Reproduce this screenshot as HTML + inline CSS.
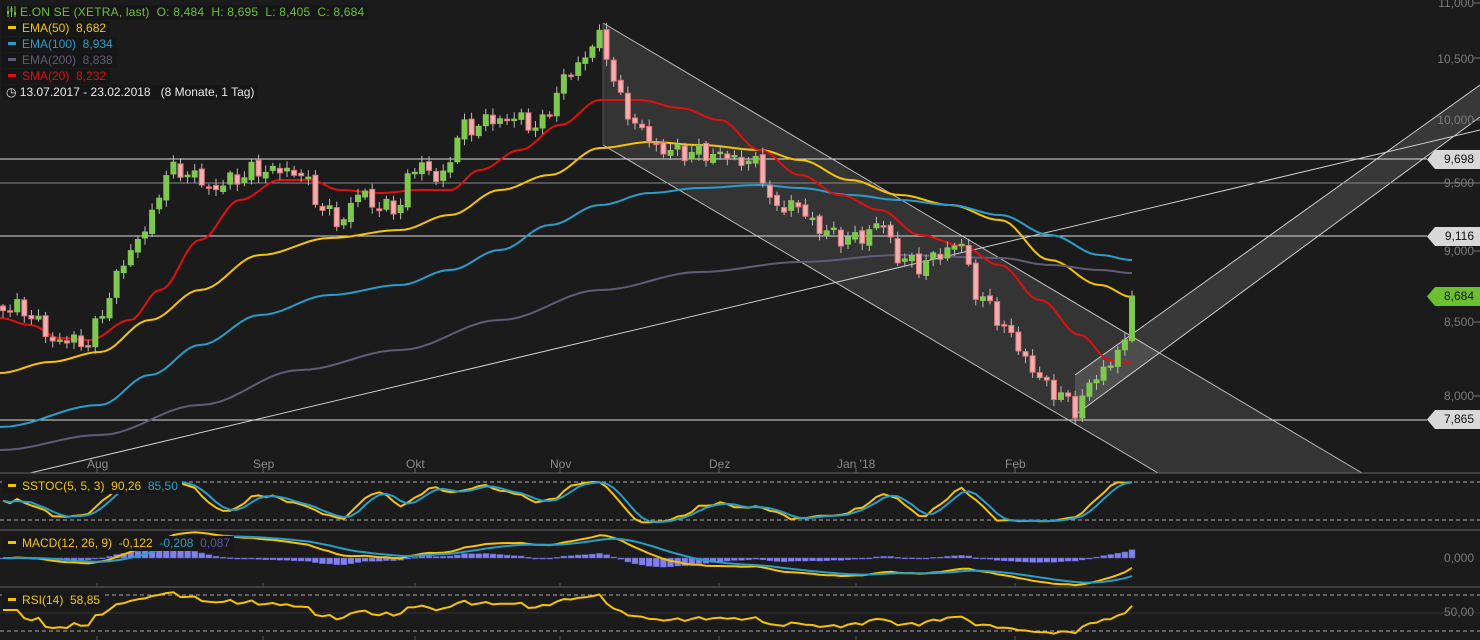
<!DOCTYPE html>
<html><head><meta charset="utf-8"><style>
html,body{margin:0;padding:0;background:#1c1b1b;overflow:hidden}
#w{position:relative;width:1480px;height:640px;font-family:"Liberation Sans",sans-serif;font-size:12px}
.lg{position:absolute;left:2px;background:#161616;padding:0 4px;height:15px;line-height:15px;white-space:nowrap}
.lg i{display:inline-block;width:8px;height:3px;vertical-align:middle;margin:0 6px 2px 2px}
.tag{position:absolute;left:1427px;width:53px;height:19px;line-height:19px;text-align:right;color:#111;font-size:12px}
.tag span{position:relative;z-index:1;padding-right:6px}
.tag svg{position:absolute;left:0;top:0}
.ax{position:absolute;right:6px;color:#7a7a7a;font-size:12px}
.mo{position:absolute;top:457px;color:#8a8a8a;font-size:12px}
</style></head><body><div id="w">
<svg id="s" width="1480" height="640" style="position:absolute;left:0;top:0"></svg>
<div class="lg" style="top:5px;color:#6cbf3a;letter-spacing:0.2px"><svg width="11" height="11" style="vertical-align:-1px;margin-right:3px"><path d="M2 0V11M5.5 0V11M9 0V11" stroke="#6cbf3a" stroke-width="1"/><rect x="1" y="5" width="2" height="3" fill="#6cbf3a"/><rect x="4.5" y="2" width="2" height="4" fill="#6cbf3a"/><rect x="8" y="6" width="2" height="3" fill="#6cbf3a"/></svg>E.ON SE (XETRA, last)&nbsp; O: 8,484&nbsp; H: 8,695&nbsp; L: 8,405&nbsp; C: 8,684</div>
<div class="lg" style="top:21px;color:#f5c400"><i style="background:#f5c400"></i>EMA(50)&nbsp; 8,682</div>
<div class="lg" style="top:37px;color:#2a9cc8"><i style="background:#2a9cc8"></i>EMA(100)&nbsp; 8,934</div>
<div class="lg" style="top:53px;color:#615b78"><i style="background:#615b78"></i>EMA(200)&nbsp; 8,838</div>
<div class="lg" style="top:69px;color:#e01010"><i style="background:#e01010"></i>SMA(20)&nbsp; 8,232</div>
<div class="lg" style="top:85px;color:#e8e8e8">&#x25F7; 13.07.2017 - 23.02.2018&nbsp;&nbsp; (8 Monate, 1 Tag)</div>
<div class="lg" style="top:479px;color:#f5c400;background:#181818"><i style="background:#f5c400"></i>SSTOC(5, 5, 3)&nbsp; 90,26&nbsp; <span style="color:#2a9cc8">85,50</span></div>
<div class="lg" style="top:536px;color:#f5c400;background:#181818"><i style="background:#f5c400"></i>MACD(12, 26, 9)&nbsp; -0,122&nbsp; <span style="color:#2a9cc8">-0,208</span>&nbsp; <span style="color:#5a56a8">0,087</span></div>
<div class="lg" style="top:593px;color:#f5c400;background:#181818"><i style="background:#f5c400"></i>RSI(14)&nbsp; 58,85</div>
<div class="ax" style="top:-4px">11,000</div>
<div class="ax" style="top:52px">10,500</div>
<div class="ax" style="top:113px">10,000</div>
<div class="ax" style="top:176px">9,500</div>
<div class="ax" style="top:244px">9,000</div>
<div class="ax" style="top:315px">8,500</div>
<div class="ax" style="top:389px">8,000</div>
<div class="ax" style="top:551px">0,000</div>
<div class="ax" style="top:605px">50,00</div>
<div class="mo" style="left:87px">Aug</div><div class="mo" style="left:253px">Sep</div><div class="mo" style="left:406px">Okt</div><div class="mo" style="left:550px">Nov</div><div class="mo" style="left:709px">Dez</div><div class="mo" style="left:837px">Jan '18</div><div class="mo" style="left:1005px">Feb</div>
<div class="tag" style="top:150px"><svg width="53" height="19"><path d="M0 9.5L8 0H53V19H8Z" fill="#d8d8d8"/></svg><span>9,698</span></div>
<div class="tag" style="top:227px"><svg width="53" height="19"><path d="M0 9.5L8 0H53V19H8Z" fill="#d8d8d8"/></svg><span>9,116</span></div>
<div class="tag" style="top:287px"><svg width="53" height="19"><path d="M0 9.5L8 0H53V19H8Z" fill="#6cbf2e"/></svg><span>8,684</span></div>
<div class="tag" style="top:410px"><svg width="53" height="19"><path d="M0 9.5L8 0H53V19H8Z" fill="#d8d8d8"/></svg><span>7,865</span></div>
</div>
<script>
(function(){
var s=document.getElementById('s'),h='';
function L(x1,y1,x2,y2,c,w,d){h+='<line x1="'+x1+'" y1="'+y1+'" x2="'+x2+'" y2="'+y2+'" stroke="'+c+'" stroke-width="'+(w||1)+'"'+(d?' stroke-dasharray="'+d+'"':'')+'/>';}
function P(pts,c,w){h+='<polyline fill="none" stroke="'+c+'" stroke-width="'+(w||1.5)+'" stroke-linejoin="round" points="'+pts.map(function(p){return p[0].toFixed(1)+','+p[1].toFixed(1)}).join(' ')+'"/>';}
function sm(pts){var r=[];for(var i=0;i<pts.length-1;i++){var a=pts[i],b=pts[i+1];for(var t=0;t<1;t+=0.1){var u=(1-Math.cos(t*Math.PI))/2;r.push([a[0]+(b[0]-a[0])*t,a[1]+(b[1]-a[1])*u]);}}r.push(pts[pts.length-1]);return r;}
h+='<polygon points="603,23 1362,473 1158,473 603,145" fill="rgba(255,255,255,0.11)"/>';
L(603,23,1362,473,'#bbb');L(603,145,1158,473,'#bbb');L(603,23,603,145,'#555');
h+='<polygon points="1075,375 1480,85 1480,117 1075,415" fill="rgba(255,255,255,0.13)"/>';
L(1075,375,1480,85,'#ccc');L(1075,415,1480,117,'#ccc');
L(30,473,1480,130,'#ccc');
L(0,159,1427,159,'#ddd');L(0,236,1427,236,'#ddd');L(0,420,1427,420,'#ddd');L(0,183,1480,183,'#888');
[3,58,120,183,251,322,396].forEach(function(y){L(1474,y,1480,y,'#777')});
L(0,473,1480,473,'#666');L(0,530,1480,530,'#666');L(0,587,1480,587,'#666');
[97,263,415,560,719,856,1015].forEach(function(x){L(x,468,x,473,'#666');L(x,583,x,587,'#555');L(x,636,x,640,'#555')});
L(0,482,1480,482,'#aaa','1','4 3');L(0,520,1480,520,'#aaa','1','4 3');
L(0,595,1480,595,'#aaa','1','4 3');L(0,631,1480,631,'#aaa','1','4 3');L(0,613,1480,613,'#333');
P(sm([[0,373],[50,362],[100,352],[150,320],[200,290],[260,255],[330,238],[400,230],[450,215],[500,190],[550,175],[600,148],[650,142],[700,145],[760,150],[800,160],[850,180],[900,195],[950,205],[1000,220],[1050,260],[1100,285],[1132,297]]),'#f5c400',2);
P(sm([[0,427],[100,405],[150,375],[200,345],[260,315],[330,295],[400,285],[450,270],[500,250],[550,225],[600,205],[650,193],[700,188],[760,185],[800,188],[850,195],[900,200],[950,205],[1000,215],[1050,235],[1100,255],[1132,260]]),'#2a9cc8',2);
P(sm([[0,450],[100,435],[200,405],[300,370],[400,350],[500,320],[600,290],[700,272],[800,262],[900,255],[1000,258],[1050,265],[1100,270],[1132,273]]),'#615b78',2);
P(sm([[0,318],[30,325],[60,338],[90,340],[130,320],[160,290],[200,240],[240,200],[280,180],[310,180],[340,190],[380,193],[420,190],[450,190],[480,170],[520,150],[560,125],[600,100],[640,100],[680,108],[720,120],[760,150],[800,175],[840,195],[880,210],[920,235],[960,245],[1000,265],[1040,300],[1080,335],[1110,360],[1132,363]]),'#e01010',2);
var K=[[0,306],[30,312],[50,340],[90,342],[105,305],[120,270],[140,235],[150,225],[165,172],[190,172],[210,190],[250,172],[265,170],[300,172],[320,205],[340,225],[360,190],[380,210],[400,205],[410,175],[420,160],[440,185],[460,130],[470,128],[490,120],[520,118],[540,130],[560,85],[575,68],[590,50],[603,32],[610,70],[620,100],[640,130],[660,150],[720,155],[760,165],[775,215],[790,200],[810,220],[830,235],[860,240],[880,220],[900,260],[920,265],[940,255],[960,240],[975,290],[1000,320],[1020,350],[1040,380],[1060,395],[1075,410],[1090,385],[1110,362],[1125,345],[1132,296]];
function iy(x){for(var i=1;i<K.length;i++)if(x<=K[i][0]){var a=K[i-1],b=K[i];return a[1]+(b[1]-a[1])*(x-a[0])/(b[0]-a[0]);}return K[K.length-1][1];}
var C=[],X=[],n=160;
for(var i=0;i<n;i++){var x=3+i*(1129/(n-1));X.push(x);var c=iy(x)+Math.sin(i*2.3)*6+Math.cos(i*1.7)*4;if(i==n-1)c=296;C.push(c);}
var Hh=[],Ll=[];
for(var i=0;i<n;i++){var o=i?C[i-1]+Math.sin(i*3.1)*2:306,c=C[i],up=c<o,tp=Math.min(o,c),bt=Math.max(o,c);if(bt-tp<1.5)bt=tp+1.5;
var hi=tp-2-Math.abs(Math.sin(i*5.3))*5,lo=bt+2+Math.abs(Math.cos(i*4.1))*5;Hh.push(hi);Ll.push(lo);
var col=up?'#7ec850':'#e2747a',fc=up?'#7ec850':'#f0b0b0';
L(X[i].toFixed(1),hi.toFixed(1),X[i].toFixed(1),lo.toFixed(1),'#bbbbbb',1);
h+='<rect x="'+(X[i]-2.5).toFixed(1)+'" y="'+tp.toFixed(1)+'" width="5" height="'+(bt-tp).toFixed(1)+'" fill="'+fc+'" stroke="'+col+'" stroke-width="1"/>';}
var raw=[];for(var i=0;i<n;i++){var a=Math.max(0,i-4),hh=1e9,ll=-1e9;for(var j=a;j<=i;j++){hh=Math.min(hh,Hh[j]);ll=Math.max(ll,Ll[j]);}raw.push(ll==hh?50:100*(ll-C[i])/(ll-hh));}
function sma(a,p){return a.map(function(v,i){var s=0,k=0;for(var j=Math.max(0,i-p+1);j<=i;j++){s+=a[j];k++;}return s/k;});}
var Kk=sma(raw,5),D=sma(Kk,3);
function sy(v){return 525-v*0.47;}
P(Kk.map(function(v,i){return[X[i],sy(v)]}),'#f5c400',2);P(D.map(function(v,i){return[X[i],sy(v)]}),'#2a9cc8',2);
var pr=C.map(function(y){return Math.exp((11486-y)/1234);});
function ema(a,p){var k=2/(p+1),r=[],e=a[0];a.forEach(function(v){e=v*k+e*(1-k);r.push(e)});return r;}
var e12=ema(pr,12),e26=ema(pr,26),m=e12.map(function(v,i){return v-e26[i]}),sg=ema(m,9);
function my(v){return 558-v*0.09;}
for(var i=0;i<n;i++){var hv=m[i]-sg[i],y=my(hv);h+='<rect x="'+(X[i]-3).toFixed(1)+'" y="'+Math.min(y,558).toFixed(1)+'" width="6" height="'+Math.max(1,Math.abs(y-558)).toFixed(1)+'" fill="#8080e8" stroke="#5a5ac0" stroke-width="0.5"/>';}
P(m.map(function(v,i){return[X[i],my(v)]}),'#f5c400',2);P(sg.map(function(v,i){return[X[i],my(v)]}),'#2a9cc8',2);
var g=0,l=0,rs=[];for(var i=0;i<n;i++){var d=i?pr[i]-pr[i-1]:0;var u=Math.max(d,0),dn=Math.max(-d,0);if(i<14){g=(g*i+u)/(i+1);l=(l*i+dn)/(i+1);}else{g=(g*13+u)/14;l=(l*13+dn)/14;}rs.push(i<3?55:(l==0?80:100-100/(1+g/l)));}
P(rs.map(function(v,i){return[X[i],Math.max(590,Math.min(637,613-(v-50)*0.6))]}),'#f5c400',2);
s.innerHTML=h;
})();
</script>
</body></html>
